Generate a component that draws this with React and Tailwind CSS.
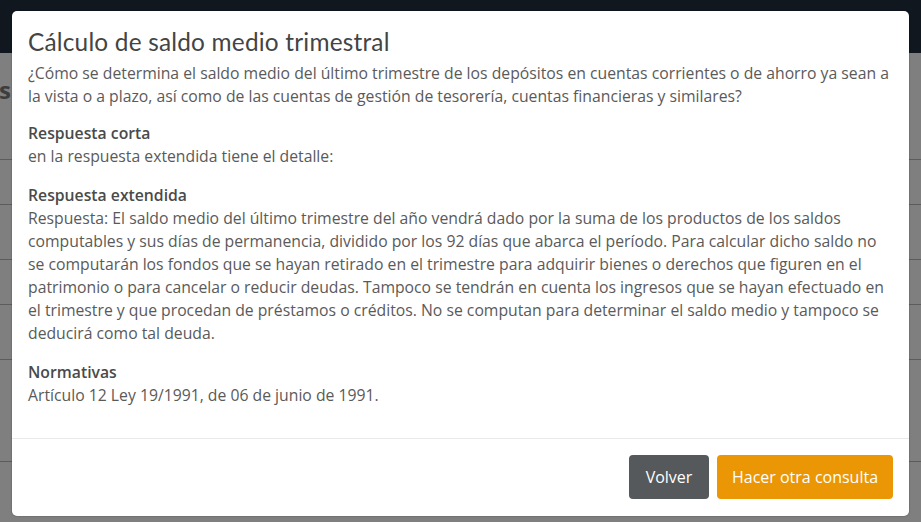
import React from 'react';

const rows = [159, 204, 259, 304, 359, 461];

const Backdrop = () => (
  <div className="absolute inset-0 flex flex-col">
    <div className="h-[53px] bg-[#10171e]" />
    <div className="flex-1 bg-[#7f7f7f] relative">
      {/* page title peeking out behind the modal */}
      <div className="absolute left-[-1px] top-[22px] text-[24px] leading-[30px] font-bold text-[#3d3d3d] font-['Open_Sans']">
        s
      </div>
      {rows.map((y) => (
        <div key={y} className="absolute left-0 right-0 h-px bg-[#5c5c5c]" style={{ top: y - 53 }} />
      ))}
    </div>
  </div>
);

const Section = ({ title, children, className = '' }) => (
  <div className={className}>
    <div className="font-semibold text-[#4a4a4a]">{title}</div>
    <div>{children}</div>
  </div>
);

export default function App() {
  return (
    <div className="relative w-[921px] h-[522px] overflow-hidden font-['Open_Sans',sans-serif]">
      <Backdrop />

      {/* Modal */}
      <div className="absolute left-[12px] top-[11px] w-[897px] h-[505px] bg-white rounded-[5px] shadow-[0_0_2px_rgba(0,0,0,0.35)] flex flex-col">
        <div className="px-4 pt-4 flex-1 text-[15.75px] leading-[23px] text-[#5a5a5a]">
          <h2 className="font-['Lato',sans-serif] text-[24.4px] leading-[30px] text-[#444] tracking-[0.2px]">
            Cálculo de saldo medio trimestral
          </h2>
          <p className="mt-[5px]">
            ¿Cómo se determina el saldo medio del último trimestre de los depósitos en cuentas corrientes o de ahorro ya sean a
            <br />
            la vista o a plazo, así como de las cuentas de gestión de tesorería, cuentas financieras y similares?
          </p>

          <Section title="Respuesta corta" className="mt-[14px]">
            en la respuesta extendida tiene el detalle:
          </Section>

          <Section title="Respuesta extendida" className="mt-4">
            Respuesta: El saldo medio del último trimestre del año vendrá dado por la suma de los productos de los saldos
            <br />
            computables y sus días de permanencia, dividido por los 92 días que abarca el período. Para calcular dicho saldo no
            <br />
            se computarán los fondos que se hayan retirado en el trimestre para adquirir bienes o derechos que figuren en el
            <br />
            patrimonio o para cancelar o reducir deudas. Tampoco se tendrán en cuenta los ingresos que se hayan efectuado en
            <br />
            el trimestre y que procedan de préstamos o créditos. No se computan para determinar el saldo medio y tampoco se
            <br />
            deducirá como tal deuda.
          </Section>

          <Section title="Normativas" className="mt-4">
            Artículo 12 Ley 19/1991, de 06 de junio de 1991.
          </Section>
        </div>

        <div className="h-[78px] border-t border-[#e9e9e9] flex items-start justify-end gap-2 px-4 pt-4">
          <button className="h-[44px] w-[80px] rounded-[4px] bg-[#55595c] text-white text-[16px]">
            Volver
          </button>
          <button className="h-[44px] w-[176px] rounded-[4px] bg-[#eb9605] text-white text-[16px]">
            Hacer otra consulta
          </button>
        </div>
      </div>
    </div>
  );
}
